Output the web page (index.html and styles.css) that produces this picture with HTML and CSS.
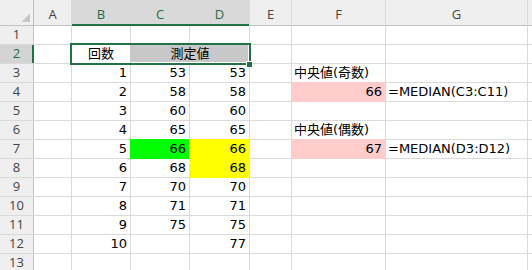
FILE: index.html
```html
<!DOCTYPE html>
<html lang="ja">
<head>
<meta charset="utf-8">
<title>中央値</title>
<link rel="stylesheet" href="styles.css">
</head>
<body>
<div class="sheet">
  <div class="corner"></div>
  <div class="ch">A</div><div class="ch sel">B</div><div class="ch sel">C</div><div class="ch sel">D</div><div class="ch">E</div><div class="ch">F</div><div class="ch">G</div><div class="ch"></div>

  <div class="rh">1</div><div class="c"></div><div class="c"></div><div class="c"></div><div class="c"></div><div class="c"></div><div class="c"></div><div class="c"></div><div class="c"></div>

  <div class="rh sel">2</div><div class="c"></div><div class="c ctr">回数</div><div class="c ctr merged">測定値</div><div class="c"></div><div class="c"></div><div class="c"></div><div class="c"></div>

  <div class="rh">3</div><div class="c"></div><div class="c n">1</div><div class="c n">53</div><div class="c n">53</div><div class="c"></div><div class="c">中央値(奇数)</div><div class="c"></div><div class="c"></div>

  <div class="rh">4</div><div class="c"></div><div class="c n">2</div><div class="c n">58</div><div class="c n">58</div><div class="c"></div><div class="c n pink">66</div><div class="c">=MEDIAN(C3:C11)</div><div class="c"></div>

  <div class="rh">5</div><div class="c"></div><div class="c n">3</div><div class="c n">60</div><div class="c n">60</div><div class="c"></div><div class="c"></div><div class="c"></div><div class="c"></div>

  <div class="rh">6</div><div class="c"></div><div class="c n">4</div><div class="c n">65</div><div class="c n">65</div><div class="c"></div><div class="c">中央値(偶数)</div><div class="c"></div><div class="c"></div>

  <div class="rh">7</div><div class="c"></div><div class="c n">5</div><div class="c n green">66</div><div class="c n yellow">66</div><div class="c"></div><div class="c n pink">67</div><div class="c">=MEDIAN(D3:D12)</div><div class="c"></div>

  <div class="rh">8</div><div class="c"></div><div class="c n">6</div><div class="c n">68</div><div class="c n yellow">68</div><div class="c"></div><div class="c"></div><div class="c"></div><div class="c"></div>

  <div class="rh">9</div><div class="c"></div><div class="c n">7</div><div class="c n">70</div><div class="c n">70</div><div class="c"></div><div class="c"></div><div class="c"></div><div class="c"></div>

  <div class="rh">10</div><div class="c"></div><div class="c n">8</div><div class="c n">71</div><div class="c n">71</div><div class="c"></div><div class="c"></div><div class="c"></div><div class="c"></div>

  <div class="rh">11</div><div class="c"></div><div class="c n">9</div><div class="c n">75</div><div class="c n">75</div><div class="c"></div><div class="c"></div><div class="c"></div><div class="c"></div>

  <div class="rh">12</div><div class="c"></div><div class="c n">10</div><div class="c n"></div><div class="c n">77</div><div class="c"></div><div class="c"></div><div class="c"></div><div class="c"></div>

  <div class="rh">13</div><div class="c"></div><div class="c"></div><div class="c"></div><div class="c"></div><div class="c"></div><div class="c"></div><div class="c"></div><div class="c"></div>

  <div class="sel-cols"></div>
  <div class="sel-range"><span class="handle"></span></div>
</div>
</body>
</html>
```

FILE: styles.css
```css
html, body {
  margin: 0;
  padding: 0;
  background: #ffffff;
  overflow: hidden;
}

.sheet {
  position: relative;
  width: 532px;
  height: 270px;
  overflow: hidden;
  display: grid;
  grid-template-columns: 33px 37px 58px 58px 59px 41px 93px 141px 1fr;
  grid-template-rows: 25px repeat(13, 18px);
  gap: 1px;
  background: #dadada;
  font-family: "DejaVu Sans", "Noto Sans CJK JP", sans-serif;
  font-size: 13px;
  color: #000;
}

.corner {
  background:
    linear-gradient(135deg, transparent 50%, #c4c4c4 50%) no-repeat right 3px bottom 3px / 9px 9px,
    #efefef;
  box-shadow: 0 1px 0 #c2c2c2, 1px 0 0 #c2c2c2, 1px 1px 0 #c2c2c2;
}

.ch {
  background: #efefef;
  font-family: "Open Sans", "Noto Sans", sans-serif;
  font-size: 13px;
  color: #444;
  text-align: center;
  line-height: 19px;
  padding-top: 5px;
  box-sizing: border-box;
  box-shadow: 0 1px 0 #c2c2c2;
}

.ch.sel {
  background: #d9d9d9;
  color: #1e6b40;
}

.rh {
  background: #efefef;
  font-family: "Open Sans", "Noto Sans", sans-serif;
  font-size: 13px;
  color: #444;
  text-align: center;
  line-height: 17px;
  box-shadow: 1px 0 0 #c2c2c2;
}

.rh.sel {
  background: #d4d4d4;
  color: #1e6b40;
  box-shadow: inset -1px 0 0 #217346, 1px 0 0 #217346;
}

.c {
  background: #ffffff;
  line-height: 18px;
  padding: 0 2px;
  white-space: nowrap;
}

.n {
  text-align: right;
  padding-right: 3px;
}

.ctr {
  text-align: center;
}

.merged {
  grid-column: span 2;
  background: #c8c8c8;
  box-shadow: -1px 0 0 #c8c8c8, inset -1px -1px 0 #ffffff;
}

.pink {
  background: #ffcccc;
  box-shadow: 0 0 0 1px #ffcccc;
}

.green {
  background: #00ff00;
  box-shadow: 0 0 0 1px #00ff00;
}

.yellow {
  background: #ffff00;
  box-shadow: 0 0 0 1px #ffff00;
}

.sel-cols {
  position: absolute;
  grid-row: 1 / 2;
  grid-column: 3 / 6;
  left: 0;
  right: 0;
  bottom: -1px;
  height: 2px;
  background: #217346;
  z-index: 2;
}

.sel-range {
  position: absolute;
  grid-row: 3 / 4;
  grid-column: 3 / 6;
  top: -2px;
  left: -2px;
  right: -2px;
  bottom: -2px;
  border: 2px solid #217346;
  z-index: 3;
}

.handle {
  position: absolute;
  right: -3px;
  bottom: -4px;
  width: 5px;
  height: 5px;
  background: #217346;
  border-top: 1px solid #ffffff;
  border-left: 1px solid #ffffff;
}
```
